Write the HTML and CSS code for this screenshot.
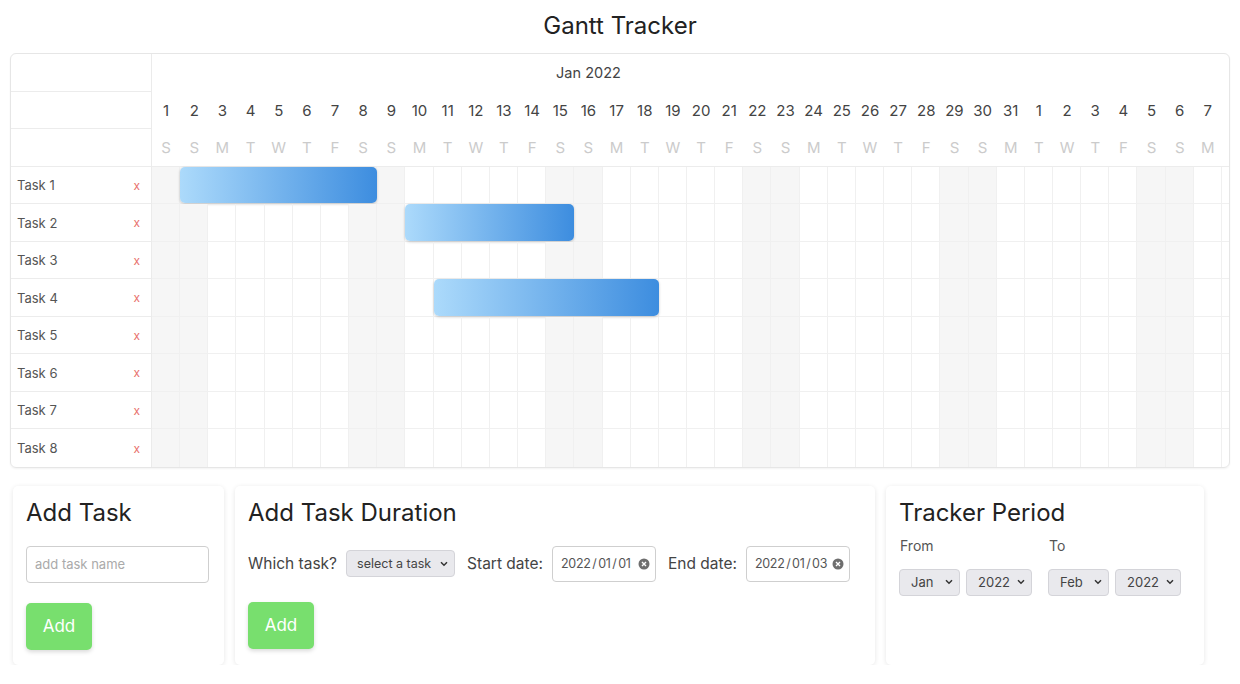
FILE: index.html
```html
<!DOCTYPE html>
<html lang="en">
<head>
  <meta charset="UTF-8">
  <title>Gantt Tracker</title>
  <meta name="viewport" content="width=device-width, initial-scale=1.0">
  <link rel="stylesheet" href="styles.css">
</head>
<body>
  <h1 class="title">Gantt Tracker</h1>

  <div class="chart">
    <div class="names" id="names">
      <div class="name-cell head"></div>
      <div class="name-cell head"></div>
      <div class="name-cell head"></div>
    </div>
    <div class="timeline">
      <div class="month-row">
        <div class="month" id="month-jan">Jan 2022</div>
      </div>
      <div class="day-row" id="day-nums"></div>
      <div class="day-row letters" id="day-letters"></div>
      <div id="rows"></div>
    </div>
  </div>

  <div class="panels">
    <div class="card card-task">
      <h2>Add Task</h2>
      <input class="text-input" type="text" placeholder="add task name">
      <button class="btn">Add</button>
    </div>

    <div class="card card-duration">
      <h2>Add Task Duration</h2>
      <div class="field-row">
        <span class="field-label">Which task?</span>
        <div class="select select-task">
          <span>select a task</span>
          <svg width="8" height="6" viewBox="0 0 8 6"><path d="M1 1.2l3 3 3-3" fill="none" stroke="#333" stroke-width="1.5"/></svg>
        </div>
        <span class="field-label">Start date:</span>
        <div class="date">
          <span>2022 / 01 / 01</span>
          <svg width="12" height="12" viewBox="0 0 12 12"><circle cx="6" cy="6" r="5.5" fill="#6e6e6e"/><path d="M4 4l4 4M8 4l-4 4" stroke="#fff" stroke-width="1.4"/></svg>
        </div>
        <span class="field-label">End date:</span>
        <div class="date">
          <span>2022 / 01 / 03</span>
          <svg width="12" height="12" viewBox="0 0 12 12"><circle cx="6" cy="6" r="5.5" fill="#6e6e6e"/><path d="M4 4l4 4M8 4l-4 4" stroke="#fff" stroke-width="1.4"/></svg>
        </div>
      </div>
      <button class="btn">Add</button>
    </div>

    <div class="card card-period">
      <h2>Tracker Period</h2>
      <div class="period">
        <div class="period-group">
          <span class="group-label">From</span>
          <div class="group-selects">
            <div class="select select-month">
              <span>Jan</span>
              <svg width="8" height="6" viewBox="0 0 8 6"><path d="M1 1.2l3 3 3-3" fill="none" stroke="#333" stroke-width="1.5"/></svg>
            </div>
            <div class="select select-year">
              <span>2022</span>
              <svg width="8" height="6" viewBox="0 0 8 6"><path d="M1 1.2l3 3 3-3" fill="none" stroke="#333" stroke-width="1.5"/></svg>
            </div>
          </div>
        </div>
        <div class="period-group">
          <span class="group-label">To</span>
          <div class="group-selects">
            <div class="select select-month">
              <span>Feb</span>
              <svg width="8" height="6" viewBox="0 0 8 6"><path d="M1 1.2l3 3 3-3" fill="none" stroke="#333" stroke-width="1.5"/></svg>
            </div>
            <div class="select select-year">
              <span>2022</span>
              <svg width="8" height="6" viewBox="0 0 8 6"><path d="M1 1.2l3 3 3-3" fill="none" stroke="#333" stroke-width="1.5"/></svg>
            </div>
          </div>
        </div>
      </div>
    </div>
  </div>

  <script>
    const tasks = [
      { name: "Task 1", start: 2, end: 8 },
      { name: "Task 2", start: 10, end: 15 },
      { name: "Task 3" },
      { name: "Task 4", start: 11, end: 18 },
      { name: "Task 5" },
      { name: "Task 6" },
      { name: "Task 7" },
      { name: "Task 8" }
    ];

    const letters = "SMTWTFS";
    const shown = 38;
    const days = [];
    for (let i = 0; i < shown + 1; i++) {
      const d = new Date(2022, 0, 1 + i);
      days.push({ num: d.getDate(), wd: d.getDay() });
    }

    document.getElementById("month-jan").style.width = "calc(31 * var(--day))";

    const nums = document.getElementById("day-nums");
    const lets = document.getElementById("day-letters");
    days.forEach((d, i) => {
      const n = document.createElement("div");
      n.className = "day";
      n.textContent = i < shown ? d.num : "";
      nums.appendChild(n);
      const l = document.createElement("div");
      l.className = "day";
      l.textContent = i < shown ? letters[d.wd] : "";
      lets.appendChild(l);
    });

    const names = document.getElementById("names");
    const rows = document.getElementById("rows");
    tasks.forEach(t => {
      const nc = document.createElement("div");
      nc.className = "name-cell";
      nc.innerHTML = "<span>" + t.name + "</span><span class='remove'>x</span>";
      names.appendChild(nc);

      const row = document.createElement("div");
      row.className = "task-row";
      days.forEach(d => {
        const c = document.createElement("div");
        c.className = (d.wd === 0 || d.wd === 6) ? "cell weekend" : "cell";
        row.appendChild(c);
      });
      if (t.start) {
        const bar = document.createElement("div");
        bar.className = "bar";
        bar.style.left = "calc(" + (t.start - 1) + " * var(--day))";
        bar.style.width = "calc(" + (t.end - t.start + 1) + " * var(--day))";
        row.appendChild(bar);
      }
      rows.appendChild(row);
    });
  </script>
</body>
</html>
```

FILE: styles.css
```css
:root {
  --day: 28.16px;
  --row: 37.5px;
}

body {
  margin: 0;
  background: #fff;
  color: #333;
  font-family: Inter, "Noto Sans", sans-serif;
}

.title {
  margin: 0;
  height: 53px;
  line-height: 51px;
  text-align: center;
  font-size: 24px;
  font-weight: 400;
  color: #222;
}

/* chart */

.chart {
  display: flex;
  margin: 0 10px;
  border: 1px solid #e6e6e6;
  border-radius: 6px;
  overflow: hidden;
  box-shadow: 0 1px 2px rgba(0, 0, 0, 0.05);
}

.names {
  width: 141px;
  flex-shrink: 0;
  box-sizing: border-box;
  border-right: 1px solid #ebebeb;
}

.name-cell {
  height: var(--row);
  box-sizing: border-box;
  border-bottom: 1px solid #ececec;
  display: flex;
  align-items: center;
  justify-content: space-between;
  padding: 1px 11px 0 6px;
  font-size: 13px;
  color: #555;
}

.name-cell:last-child {
  border-bottom: none;
}

.remove {
  color: #e8706b;
  font-size: 12px;
}

.timeline {
  flex: 1;
  overflow: hidden;
}

.month-row,
.day-row {
  display: flex;
  height: var(--row);
}

.month {
  flex-shrink: 0;
  text-align: center;
  line-height: 38px;
  font-size: 14.5px;
  color: #444;
}

.day {
  width: var(--day);
  flex-shrink: 0;
  text-align: center;
  line-height: 38px;
  font-size: 15px;
  color: #444;
}

.letters {
  box-sizing: border-box;
  border-bottom: 1px solid #ececec;
}

.letters .day {
  color: #cbcbcb;
  line-height: 37px;
}

.task-row {
  position: relative;
  display: flex;
  height: var(--row);
  box-sizing: border-box;
  border-bottom: 1px solid #f0f0f0;
}

.task-row:last-child {
  border-bottom: none;
}

.cell {
  width: var(--day);
  flex-shrink: 0;
  box-sizing: border-box;
  border-right: 1px solid #f0f0f0;
}

.cell.weekend {
  background: #f6f6f6;
}

.bar {
  position: absolute;
  top: 0;
  bottom: 0;
  border-radius: 5px;
  background: linear-gradient(to right, #acdafb, #3d8ddf);
  box-shadow: 0 1px 3px rgba(0, 0, 0, 0.2);
}

/* bottom panels */

.panels {
  display: flex;
  gap: 11px;
  padding: 18px 13px 0;
}

.card {
  box-sizing: border-box;
  background: #fff;
  border-radius: 5px;
  box-shadow: 0 1px 5px rgba(0, 0, 0, 0.1);
  padding: 12px 13px 15px;
}

.card-task {
  width: 211px;
}

.card-duration {
  width: 640px;
}

.card-period {
  width: 318px;
}

.card h2 {
  margin: 0;
  font-size: 24px;
  line-height: 29px;
  font-weight: 400;
  color: #222;
}

.text-input {
  display: block;
  box-sizing: border-box;
  width: 183px;
  height: 37px;
  margin-top: 19px;
  padding: 0 8px;
  border: 1px solid #cfcfcf;
  border-radius: 4px;
  font-family: inherit;
  font-size: 13px;
  outline: none;
}

.text-input::placeholder {
  color: #aaa;
}

.btn {
  display: block;
  margin-top: 20px;
  width: 66px;
  height: 47px;
  border: none;
  border-radius: 5px;
  background: #78df6e;
  color: #fff;
  font-family: inherit;
  font-size: 17px;
  box-shadow: 0 2px 4px rgba(0, 0, 0, 0.15);
}

.field-row {
  display: flex;
  align-items: center;
  gap: 9px;
  margin-top: 19px;
  height: 36px;
}

.field-label {
  font-size: 15.5px;
  color: #444;
  white-space: nowrap;
  margin-left: 3px;
}

.field-label:first-child {
  margin-left: 0;
}

.select {
  display: flex;
  align-items: center;
  justify-content: space-between;
  box-sizing: border-box;
  height: 27px;
  padding: 0 6px 0 11px;
  background: #e9e9ed;
  border: 1px solid #d4d4d9;
  border-radius: 4px;
  font-size: 13px;
  color: #444;
  white-space: nowrap;
}

.select-task {
  width: 109px;
  padding-left: 10px;
  font-size: 12.5px;
}

.select-month {
  width: 61px;
}

.select-year {
  width: 66px;
}

.date {
  display: flex;
  align-items: center;
  justify-content: space-between;
  box-sizing: border-box;
  width: 104px;
  height: 36px;
  padding: 0 5px 0 8px;
  border: 1px solid #cfcfcf;
  border-radius: 4px;
  font-size: 12.5px;
  letter-spacing: -0.3px;
  word-spacing: -1.5px;
  color: #555;
  white-space: nowrap;
}

.period {
  display: flex;
  gap: 16px;
  margin-top: 10px;
}

.period-group {
  display: flex;
  flex-direction: column;
  gap: 15px;
}

.group-label {
  font-size: 14px;
  color: #555;
  padding-left: 1px;
}

.group-selects {
  display: flex;
  gap: 6px;
}
```
